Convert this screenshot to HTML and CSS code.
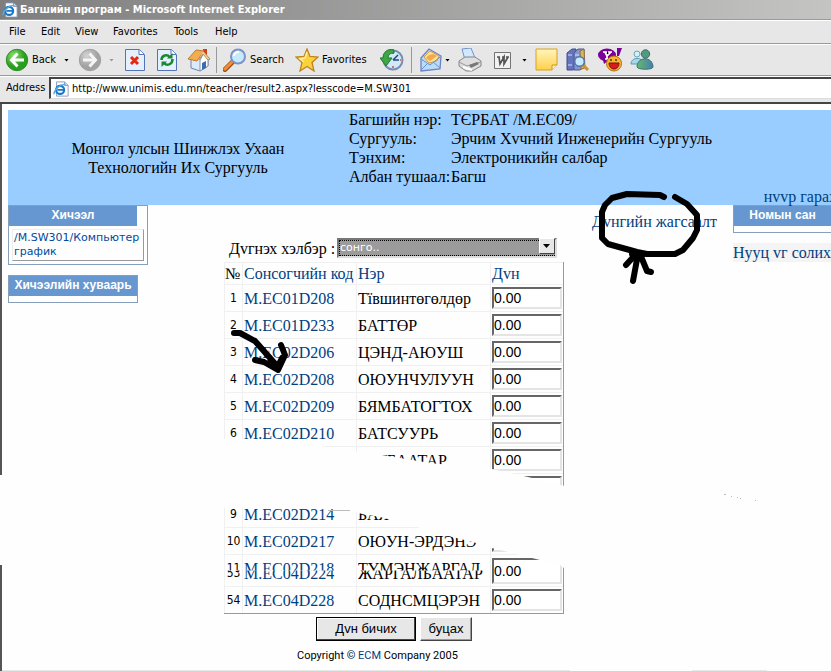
FILE: index.html
```
<!DOCTYPE html>
<html lang="mn">
<head>
<meta charset="utf-8">
<title>Багшийн програм - Microsoft Internet Explorer</title>
<link rel="stylesheet" href="styles.css">
</head>
<body>
<header class="chrome">
  <div class="titlebar">
    <svg class="ie" viewBox="0 0 18 18"><path d="M4 1h9l4 4v12H4z" fill="#fff" stroke="#8294b4"/><path d="M13 1v4h4" fill="#cbd6ec" stroke="#8294b4"/><circle cx="8" cy="10" r="4.5" fill="none" stroke="#1878c8" stroke-width="2.5"/><path d="M5 10h8" stroke="#1878c8" stroke-width="2"/><path d="M1 15C1 10 8 3 14 4" fill="none" stroke="#58aae8" stroke-width="1.5"/></svg>
    <span>Багшийн програм - Microsoft Internet Explorer</span>
  </div>
  <nav class="menubar">
    <button class="m-file">File</button><button class="m-edit">Edit</button><button class="m-view">View</button><button class="m-fav">Favorites</button><button class="m-tools">Tools</button><button>Help</button>
  </nav>
  <div class="toolbar">
    <button class="tool back" aria-label="Back">
      <svg class="icon" viewBox="0 0 24 24"><defs><radialGradient id="g1" cx=".35" cy=".3"><stop offset="0" stop-color="#8fe070"/><stop offset="1" stop-color="#27a01c"/></radialGradient><radialGradient id="g2" cx=".35" cy=".3"><stop offset="0" stop-color="#d4d4d4"/><stop offset="1" stop-color="#a2a2a2"/></radialGradient></defs><circle cx="12" cy="12" r="10.7" fill="url(#g1)" stroke="#2f8a2c"/><path d="M12.500 5.500L6.500 12l6 6.500M7 12h12" fill="none" stroke="#fff" stroke-width="3"/></svg>
      <span>Back</span></button>
    <span class="caret"></span>
    <button class="tool forward" aria-label="Forward"><svg class="icon" viewBox="0 0 24 24"><circle cx="12" cy="12" r="10.700" fill="url(#g2)" stroke="#a0a0a0"/><path d="M11.500 5.500l6 6.500-6 6.500M17 12H5" fill="none" stroke="#f5f5f5" stroke-width="3"/></svg></button>
    <span class="caret pale"></span>
    <button class="tool stop" aria-label="Stop"><svg class="icon sheet" viewBox="0 0 20 24"><path d="M.5 1.500h14l5 5v16H.5z" fill="#e4f0fd" stroke="#5474b8"/><path d="M14 1.500v5h5" fill="#fff" stroke="#5474b8"/><path d="M6 9l7 7M13 9l-7 7" stroke="#e6290c" stroke-width="3"/></svg></button>
    <button class="tool refresh" aria-label="Refresh"><svg class="icon sheet" viewBox="0 0 20 24"><path d="M.5 1.500h14l5 5v16H.5z" fill="#e4f0fd" stroke="#5474b8"/><path d="M14 1.500v5h5" fill="#fff" stroke="#5474b8"/><path d="M4.500 12c0-5 6-6 8-3M15.500 11c0 6-6 7-8.500 4" fill="none" stroke="#198a2c" stroke-width="2.500"/><path d="M10 10.500h5.500V5zM10 13.500H4.500V19z" fill="#198a2c"/></svg></button>
    <button class="tool home" aria-label="Home"><svg class="icon" viewBox="0 0 24 24"><path d="M16 1h4v7h-4z" fill="#d83a1c"/><path d="M4 11v9l9 3 8-5v-9l-5-5z" fill="#dce9f9" stroke="#6c84ae"/><path d="M13 12v11l8-5V9l-4-4z" fill="#fff" stroke="#7e93b8"/><path d="M1 11L9 2l8 1-7 10z" fill="#f2ad50" stroke="#bd7b2f"/><path d="M16 3l7 8-2 1-5-6-4 6" fill="#f7d6a0" stroke="#b48a54"/><path d="M15 15l4-2v7l-4 2z" fill="#3a6cae"/></svg></button>
    <span class="sep"></span>
    <button class="tool search"><svg class="icon" viewBox="0 0 24 24"><path d="M2 21.500l7-7" stroke="#a05418" stroke-width="5" stroke-linecap="round"/><path d="M2 21l7-7" stroke="#f28c38" stroke-width="3" stroke-linecap="round"/><circle cx="15" cy="8.500" r="7" fill="#c6eafb" stroke="#7c93c8" stroke-width="2"/><path d="M11 8c0-3 3-4 5-4" fill="none" stroke="#fff" stroke-width="2"/></svg><span>Search</span></button>
    <button class="tool favs"><svg class="icon" viewBox="0 0 24 24"><path d="M12 1l3 7.500 8 .5-6 5.500 2 8.500-7-4.500L5 23l2-8.500L1 9l8-.5z" fill="#fcd23c" stroke="#bd8420" stroke-width="1.300"/><path d="M12 4l-2 6-5 1 4 3" fill="none" stroke="#fff19a" stroke-width="1.500"/></svg><span>Favorites</span></button>
    <button class="tool history" aria-label="History"><svg class="icon" viewBox="0 0 24 24"><circle cx="13" cy="12" r="9.500" fill="#cfe9fa" stroke="#788db4" stroke-width="2"/><path d="M13 12l5-5M13 12h6" stroke="#26477c" stroke-width="1.500"/><path d="M13 4v2M13 18v2M20 12h1" stroke="#e04a2c" stroke-width="1.500"/><path d="M14 2C8 0 3 4 3 10H0l6 8 6-8H8c0-3 2-5 6-5z" fill="#3da645" stroke="#21762b"/></svg></button>
    <span class="sep"></span>
    <button class="tool mail" aria-label="Mail"><svg class="icon" viewBox="0 0 24 24"><path d="M2 10L10 1l12 7-1 13L2 23z" fill="#b9ddf9" stroke="#6a83c0" stroke-width="1.300"/><path d="M5 9l6-6 9 5-2 5-8 2z" fill="#ffe29a" stroke="#d69b4c"/><path d="M7 10c2-4 8-5 11-2l-7 5z" fill="#f2a94a"/><path d="M2 11l9 6 10-8M2 22l7-7M21 20l-7-6" fill="none" stroke="#6a91cd"/></svg></button>
    <span class="caret"></span>
    <button class="tool print" aria-label="Print"><svg class="icon" viewBox="0 0 24 24"><path d="M4 1l9-1 4 10-10 2z" fill="#d2e8fe" stroke="#7093cc"/><path d="M1 13l6-4h10l6 4v5l-9 5H8l-7-5z" fill="#dedede" stroke="#858585"/><path d="M1 14l8 4 14-4" fill="none" stroke="#999"/><path d="M11 17l8-3 2 2-8 4z" fill="#777"/><path d="M5 19l9 3" stroke="#fff" stroke-width="2"/></svg></button>
    <button class="tool word" aria-label="Edit with Word"><svg class="icon small" viewBox="0 0 17 17"><path d="M.5.5h16v16H.5z" fill="#f2f2f2" stroke="#737373"/><path d="M3 5h3M8 5h3M12 5h3M5 5l1 7 4-7 0 7 4-7" fill="none" stroke="#555" stroke-width="1.700"/></svg></button>
    <span class="caret"></span>
    <button class="tool note" aria-label="Notes"><svg class="icon" viewBox="0 0 24 24"><defs><linearGradient id="n" x2="0" y2="1"><stop stop-color="#fff6bc"/><stop offset="1" stop-color="#ffd04c"/></linearGradient></defs><path d="M1 1h21v16l-5 5H1z" fill="url(#n)" stroke="#d9a021"/><path d="M17 22v-5h5" fill="#fff3ae" stroke="#d09418"/></svg></button>
    <button class="tool books" aria-label="Research"><svg class="icon" viewBox="0 0 24 24"><path d="M1 5l5-4h4v19l-3 2H1z" fill="#6474bd" stroke="#3e4c8e"/><path d="M8 5l4-4h6v18l-4 3H8z" fill="#8796cf" stroke="#4d5992"/><path d="M14 3l4-2 1 19-4 1z" fill="#d6b56a" stroke="#8d713c"/><path d="M2 7h4M2 17h4M9 7h4M9 17h4" stroke="#d6def5"/><path d="M17 17l5 5" stroke="#c99634" stroke-width="3"/><circle cx="13.500" cy="13.500" r="4.800" fill="#c6ebff" stroke="#5574ac" stroke-width="1.500"/></svg></button>
    <button class="tool yahoo" aria-label="Messenger"><svg class="icon" viewBox="0 0 24 24"><ellipse cx="9" cy="7" rx="9" ry="6.500" fill="#7b0099"/><path d="M5 12l1 4 5-4z" fill="#7b0099"/><path d="M5 4h4M10 4h4M7 4l2 4 4-4M9 8v3M7 11h4" stroke="#fff" stroke-width="1.700"/><path d="M19 0h5l-3 8h-2z" fill="#7b0099"/><circle cx="16" cy="15.500" r="7.500" fill="#fbb52a" stroke="#b56b18"/><path d="M11 15h10c0 8-10 8-10 0z" fill="#d81c1c" stroke="#731313"/><path d="M13 11v2M18 11v2" stroke="#5b3510" stroke-width="1.500"/></svg></button>
    <button class="tool people" aria-label="Contacts"><svg class="icon" viewBox="0 0 24 24"><defs><linearGradient id="p"><stop stop-color="#65b86a"/><stop offset="1" stop-color="#477fae"/></linearGradient></defs><circle cx="7" cy="6" r="3" fill="#d7eef4" stroke="#66a9ba"/><path d="M1 16c0-7 12-8 12 0z" fill="#a8d8e8" stroke="#5a99b3"/><circle cx="15.500" cy="6" r="4.200" fill="#4f9a82" stroke="#35705f"/><path d="M7 19c0-11 16-11 16 0 0 3-15 3-16 0z" fill="url(#p)" stroke="#3a7484"/></svg></button>
  </div>
  <div class="address">
    <label for="url">Address</label>
    <div class="urlbox">
      <svg class="ie" viewBox="0 0 18 18"><path d="M4 1h9l4 4v12H4z" fill="#fff" stroke="#8294b4"/><path d="M13 1v4h4" fill="#cbd6ec" stroke="#8294b4"/><circle cx="8" cy="10" r="4.5" fill="none" stroke="#1878c8" stroke-width="2.5"/><path d="M5 10h8" stroke="#1878c8" stroke-width="2"/><path d="M1 15C1 10 8 3 14 4" fill="none" stroke="#58aae8" stroke-width="1.5"/></svg>
      <input id="url" type="text" value="http://www.unimis.edu.mn/teacher/result2.aspx?lesscode=M.SW301">
    </div>
  </div>
</header>

<div class="page">
  <div class="banner">
    <h1>Монгол улсын Шинжлэх Ухаан<br>Технологийн Их Сургууль</h1>
    <dl>
      <dt>Багшийн нэр:</dt><dd>ТЄРБАТ /M.EC09/</dd>
      <dt>Сургууль:</dt><dd>Эрчим Хvчний Инженерийн Сургууль</dd>
      <dt>Тэнхим:</dt><dd>Электроникийн салбар</dd>
      <dt>Албан тушаал:</dt><dd>Багш</dd>
    </dl>
    <a class="home-link" href="#">нvvр гарах</a>
  </div>
  <div class="columns">
    <aside class="left">
      <section class="box wide">
        <h2>Хичээл</h2>
        <a class="lesson" href="#">/M.SW301/Компьютер график</a>
      </section>
      <section class="box">
        <h2>Хичээлийн хуваарь</h2>
      </section>
    </aside>
    <main>
      <form class="grades">
        <div class="kind">
          <label for="kind">Дvгнэх хэлбэр :</label>
          <div class="select"><select id="kind"><option>сонго..</option></select><span class="drop"></span></div>
        </div>
        <table>
          <thead><tr><th class="c-no">№</th><th class="c-code">Сонсогчийн код</th><th class="c-name">Нэр</th><th class="c-mark">Дvн</th></tr></thead>
          <tbody>
            <tr><td>1</td><td><a href="#">M.EC01D208</a></td><td>Тївшинтөгөлдөр</td><td><input aria-label="Дvн 1" value="0.00"></td></tr>
            <tr><td>2</td><td><a href="#">M.EC01D233</a></td><td>БАТТӨР</td><td><input aria-label="Дvн 2" value="0.00"></td></tr>
            <tr><td>3</td><td><a href="#">M.EC02D206</a></td><td>ЦЭНД-АЮУШ</td><td><input aria-label="Дvн 3" value="0.00"></td></tr>
            <tr><td>4</td><td><a href="#">M.EC02D208</a></td><td>ОЮУНЧУЛУУН</td><td><input aria-label="Дvн 4" value="0.00"></td></tr>
            <tr><td>5</td><td><a href="#">M.EC02D209</a></td><td>БЯМБАТОГТОХ</td><td><input aria-label="Дvн 5" value="0.00"></td></tr>
            <tr><td>6</td><td><a href="#">M.EC02D210</a></td><td>БАТСУУРЬ</td><td><input aria-label="Дvн 6" value="0.00"></td></tr>
            <tr><td></td><td></td><td>БАТБААТАР</td><td><input aria-label="Дvн 7" value="0.00"></td></tr>
            <tr><td></td><td></td><td></td><td><input aria-label="Дvн 8"></td></tr>
            <tr><td>9</td><td><a href="#">M.EC02D214</a></td><td>БАЯ</td><td></td></tr>
            <tr><td>10</td><td><a href="#">M.EC02D217</a></td><td>ОЮУН-ЭРДЭНЭ</td><td><input aria-label="Дvн 10"></td></tr>
            <tr class="spliced">
              <td><span class="splice"><span>11</span><span>53</span></span></td>
              <td><a class="splice" href="#"><span>M.EC02D218</span><span>M.EC04D224</span></a></td>
              <td><span class="splice"><span>ТҮМЭНЖАРГАЛ</span><span>ЖАРГАЛБААТАР</span></span></td>
              <td><input aria-label="Дvн 53" value="0.00"></td></tr>
            <tr><td>54</td><td><a href="#">M.EC04D228</a></td><td>СОДНСМЦЭРЭН</td><td><input aria-label="Дvн 54" value="0.00"></td></tr>
          </tbody>
        </table>
        <div class="actions"><button type="button" class="save">Дvн бичих</button><button type="button">буцах</button></div>
        <p class="copy">Copyright © <a href="#">ECM</a> Company 2005</p>
      </form>
      <a class="list-link" href="#">Дvнгийн жагсаалт</a>
    </main>
    <aside class="right">
      <section class="box wide"><h2>Номын сан</h2></section>
      <a class="password" href="#">Нууц vг солих</a>
    </aside>
  </div>
</div>

<svg class="marks" viewBox="0 0 831 671" aria-hidden="true">
  <path class="paper" d="M0 475H222V439L318 441 326 448 382 455 430 463 450 465 492 469 528 477 560 485 570 487H831V600H570V568H564L560 565 532 558 492 548 476 543 445 535 417 527 380 517 358 513 352 509 328 508H222V565H0Z"/>
  <path d="M328 510.500h22" stroke="#bbb"/>
  <path d="M724 494.500h2M731 496.500h1M737 497.500h1M740 498.500h1M755 500.500h1" stroke="#bbb"/>
  <path d="M2 670.500h568M692 670.500h75" stroke="#e7e7e7"/>
  <g class="pen">
    <path d="M664 197l-4-2-33-1-15 4-7 7-3 7v26l6 6 29 8 10 2h28l8-4 10-12 4-8v-15l-10-11-12-7"/>
    <path d="M638 254l-5 27M636 254l-10 11M640 254l7 17 4 1"/>
    <path d="M234 333h6l15 8 23 26M281 345l4 10-7 15-14-8-9-2"/>
    <path d="M632 254h12M270 362l8 4 4-8"/>
  </g>
</svg>
</body>
</html>
```
FILE: styles.css
```
* { box-sizing: border-box; }
body { margin: 0; background: #fefefe; color: #000; font: 16px/19px "Liberation Serif", "Times New Roman", serif; overflow: hidden; }
a { color: #004080; text-decoration: none; }
button { font: inherit; color: inherit; margin: 0; padding: 0; border: 0; background: none; }
input, select { font: inherit; color: inherit; }

.chrome { font: 11px/14px "DejaVu Sans Condensed", "Liberation Sans", sans-serif; background: #e7e7e7; }
.titlebar { display: flex; align-items: center; gap: 2px; height: 20px; padding: 0 2px; border-bottom: 1px solid #9a9a9a; background: linear-gradient(90deg, #7e7e7e, #c4c4c3); color: #fff; font-weight: bold; }
.ie { width: 16px; height: 16px; flex: none; }
.menubar { display: flex; height: 24px; padding-left: 9px; border-top: 1px solid #fff; border-bottom: 1px solid #9a9a9a; }
.m-file { width: 32px; }
.m-edit { width: 34px; }
.m-view { width: 38px; }
.m-fav { width: 61px; }
.m-tools { width: 41px; }
.menubar button { text-align: left; }
.toolbar { display: flex; align-items: center; height: 32px; padding-left: 5px; border-top: 1px solid #fff; border-bottom: 1px solid #9a9a9a; }
.tool { display: flex; align-items: center; gap: 3px; flex: none; }
.icon { width: 24px; height: 24px; display: block; }
.icon.sheet { width: 20px; }
.icon.small { width: 17px; height: 17px; }
.caret { width: 5px; height: 3px; background: #000; clip-path: polygon(0 0, 100% 0, 50% 100%); flex: none; }
.caret.pale { background: #999; }
.sep { width: 1px; height: 26px; background: #999; flex: none; }
.back { width: 59px; }
.forward { margin: 0 7px 0 9px; }
.stop { margin-left: 11px; }
.refresh { margin: 0 10px 0 12px; }
.home { margin-right: 5px; }
.search { width: 72px; margin-left: 6px; }
.favs { width: 85px; }
.history { margin-right: 7px; }
.mail { margin: 0 2px 0 7px; }
.print { margin: 0 12px 0 8px; }
.word { margin-right: 11px; }
.note { margin: 0 7px 0 8px; }
.books { margin-right: 8px; }
.yahoo { margin-right: 8px; }
.address { display: flex; align-items: center; height: 28px; padding: 0 0 3px 6px; border-top: 1px solid #fff; border-bottom: 2px solid #444; gap: 4px; }
.address label { width: 39px; }
.urlbox { display: flex; align-items: center; gap: 3px; flex: 1; height: 22px; padding-left: 2px; border: solid #444; border-width: 2px 0 1px 2px; border-bottom-color: #ddd; background: #fff; }
.urlbox input { flex: 1; border: 0; padding: 0; background: none; outline: 0; }

.page { min-height: 567px; padding: 6px 0 0 6px; border-left: 2px solid #555; }
.banner { position: relative; display: grid; grid-template-columns: 340px 1fr; height: 95px; background: #9cf; }
.banner h1 { margin: 0; font-size: 16px; line-height: 19px; font-weight: normal; text-align: center; align-self: center; }
.banner dl { display: grid; grid-template-columns: 102px 1fr; grid-auto-rows: 19px; margin: 0; padding-left: 1px; white-space: nowrap; }
.banner dd { margin: 0; }
.home-link { position: absolute; right: -6px; bottom: -1px; white-space: nowrap; }
.columns { display: grid; grid-template-columns: 140px 1fr 98px; }
.left { display: flex; flex-direction: column; align-items: flex-start; gap: 10px; }
.box { width: 130px; min-height: 28px; border: 1px solid #86a0bb; }
.box.wide { width: 140px; }
.box h2 { margin: 0; width: 128px; height: 20px; background: #6797d0; color: #fff; font: bold 12px/19px "Liberation Sans", Arial, sans-serif; text-align: center; }
.right .box h2 { width: 100%; }
.right .box.wide { width: auto; border-right: 0; }
.lesson { display: block; width: 132px; margin: 3px; padding: 1px; border: 1px solid #999; border-top-color: #eee; border-left-color: #eee; font: 11px/14px "DejaVu Sans", Verdana, sans-serif; color: #004a9c; }
.password { display: block; margin-top: 10px; background: #f4f4f4; white-space: nowrap; }
main { display: flex; align-items: flex-start; gap: 28px; padding-left: 76px; }
.list-link { padding-top: 7px; white-space: nowrap; }
.grades { width: 340px; flex: none; padding-top: 31px; }
.kind { display: flex; justify-content: space-between; padding: 0 7px 0 5px; height: 26px; }
.kind label { padding-top: 3px; }
.select { position: relative; width: 220px; height: 20px; }
.select select { width: 100%; height: 100%; appearance: none; padding: 0 1px; border: 2px solid; border-color: #777 #ddd #ddd #777; border-radius: 0; background: #9b9b9b; color: #fff; outline: 1px dotted #000; outline-offset: -3px; font: 11px/15px "DejaVu Sans", Verdana, sans-serif; }
.drop { position: absolute; right: 2px; top: 2px; width: 16px; height: 16px; background: #e7e7e7; border: 1px solid; border-color: #fff #444 #444 #fff; pointer-events: none; }
.drop::after { content: ""; position: absolute; left: 3px; top: 5px; width: 7px; height: 4px; background: #000; clip-path: polygon(0 0, 100% 0, 50% 100%); }
table { width: 340px; table-layout: fixed; border-spacing: 0; border: solid #999; border-width: 0 1px 1px 0; }
th, td { height: 27px; padding: 0 1px; border: solid #f0f0f0; border-width: 1px 0 0 1px; text-align: left; font-weight: normal; white-space: nowrap; }
th { height: 22px; color: #004080; }
.c-no { width: 18px; color: #000; padding: 0; }
.c-code { width: 114px; }
.c-name { width: 134px; }
td:first-child { text-align: center; padding: 0; font: 12px/19px "DejaVu Sans Condensed", sans-serif; }
td input { display: block; width: 70px; height: 22px; padding: 0; border: 2px solid; border-color: #666 #e4e4e4 #e4e4e4 #666; background: #fff; font: 14px/18px "Liberation Sans", Arial, sans-serif; }
.spliced td { height: 32px; }
.spliced input { height: 26px; }
.splice { display: grid; }
.splice span { grid-area: 1 / 1; }
.splice span:first-child { padding-bottom: 5px; clip-path: inset(0 0 12px 0); }
.splice span:last-child { padding-top: 5px; clip-path: inset(12px 0 0 0); }
.actions { display: flex; gap: 4px; padding: 3px 0 0 92px; font: 13px/18px "Liberation Sans", Arial, sans-serif; }
.actions button { width: 52px; height: 24px; background: #e7e7e7; border: 1px solid; border-color: #fff #444 #444 #fff; box-shadow: inset -1px -1px #999; }
.actions .save { width: 100px; border: 1px solid #000; box-shadow: inset -1px -1px #444, inset 1px 1px #fff; }
.copy { margin: 8px 0 0 73px; font: 11px/14px Roboto, Arial, sans-serif; }
.marks { position: absolute; left: 0; top: 0; width: 831px; height: 671px; pointer-events: none; }
.paper { fill: #fefefe; }
.pen { fill: none; stroke: #000; stroke-width: 6px; stroke-linecap: round; stroke-linejoin: round; }
```
